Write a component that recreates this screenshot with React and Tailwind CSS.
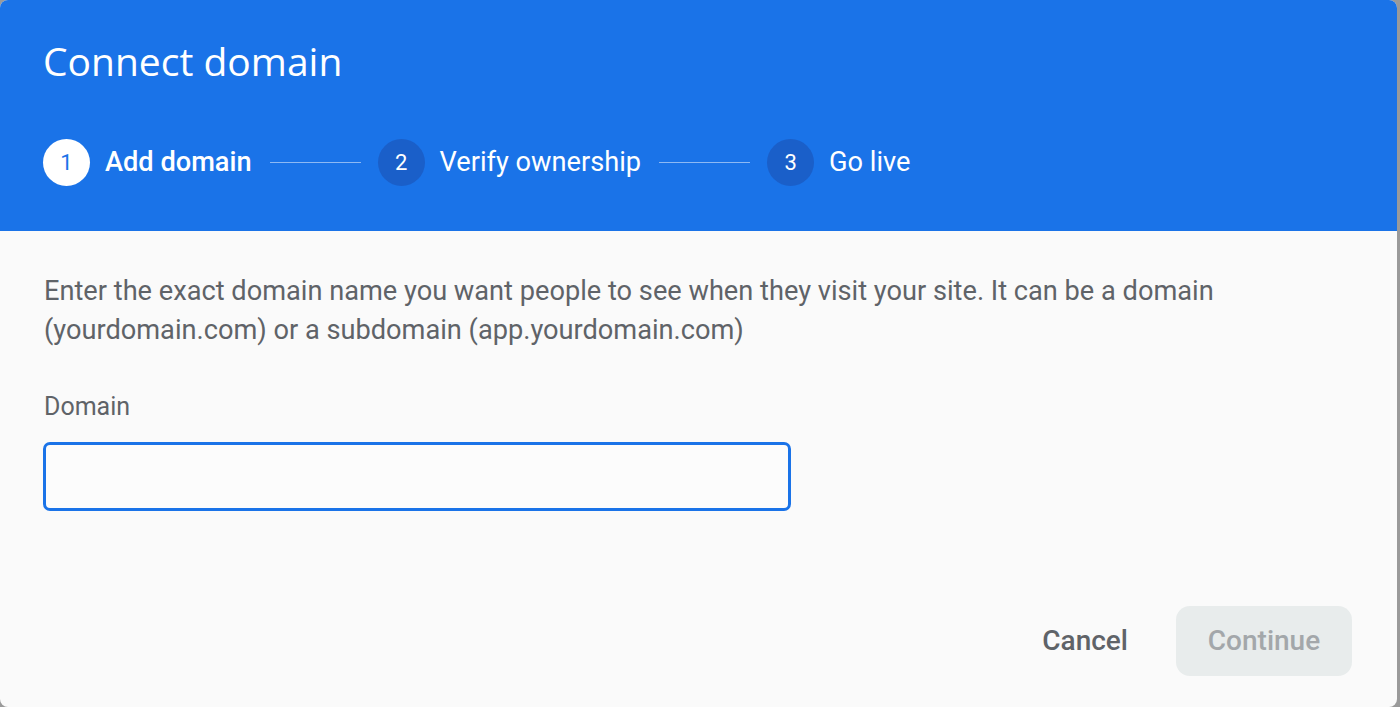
import React, { useState } from 'react';

const steps = [
  { n: 1, label: 'Add domain', active: true },
  { n: 2, label: 'Verify ownership', active: false },
  { n: 3, label: 'Go live', active: false },
];

function Step({ step }) {
  return (
    <div className="flex items-center">
      <div
        className={
          step.active
            ? 'flex h-[47px] w-[47px] items-center justify-center rounded-full bg-white text-[22px] text-[#1a73e8]'
            : 'flex h-[47px] w-[47px] items-center justify-center rounded-full bg-[#1a5fc9] text-[22px] text-white'
        }
      >
        {step.n}
      </div>
      <span
        className={
          step.active
            ? 'ml-[15px] text-[27.2px] font-medium text-white'
            : 'ml-[15px] text-[27.2px] text-white'
        }
      >
        {step.label}
      </span>
    </div>
  );
}

export default function App() {
  const [domain, setDomain] = useState('');

  return (
    <div className="h-[707px] w-full overflow-hidden bg-[#9a9a9a]" style={{ fontFamily: 'Roboto, "Liberation Sans", sans-serif' }}>
      <div className="flex h-[707px] w-[1397px] flex-col overflow-hidden rounded-[8px] bg-[#fafafa]">
        {/* header */}
        <div className="h-[231px] bg-[#1a73e8] pl-[43px] pt-[37px]">
          <h1
            className="text-[39px] leading-[48px] text-white"
            style={{ fontFamily: '"Open Sans", sans-serif' }}
          >
            Connect domain
          </h1>
          <div className="mt-[54px] flex items-center">
            {steps.map((step, i) => (
              <React.Fragment key={step.n}>
                <Step step={step} />
                {i < steps.length - 1 && (
                  <div className="ml-[18px] mr-[17px] h-px w-[91px] bg-white/50" />
                )}
              </React.Fragment>
            ))}
          </div>
        </div>

        {/* body */}
        <div className="flex flex-1 flex-col px-[44px] pt-[41px]">
          <p className="text-[27.2px] leading-[39px] text-[#5f6368]">
            Enter the exact domain name you want people to see when they visit your site. It can be a domain
            <br />
            (yourdomain.com) or a subdomain (app.yourdomain.com)
          </p>
          <label htmlFor="domain" className="mt-[37px] text-[25px] leading-[39px] text-[#5f6368]">
            Domain
          </label>
          <input
            id="domain"
            type="text"
            value={domain}
            onChange={(e) => setDomain(e.target.value)}
            className="ml-[-1px] mt-[16px] h-[69px] w-[748px] rounded-[7px] border-[3px] border-[#1a73e8] bg-[#fcfcfc] px-4 text-[24px] text-[#202124] outline-none"
          />
          <div className="mt-auto mb-[31px] mr-[1px] flex justify-end gap-4">
            <button className="h-[70px] rounded-[14px] px-[32px] text-[28px] font-medium text-[#5f6368]">
              Cancel
            </button>
            <button
              disabled
              className="h-[70px] w-[176px] rounded-[14px] bg-[#e8ecec] text-[28px] font-medium text-[#a3a7aa]"
            >
              Continue
            </button>
          </div>
        </div>
      </div>
    </div>
  );
}
